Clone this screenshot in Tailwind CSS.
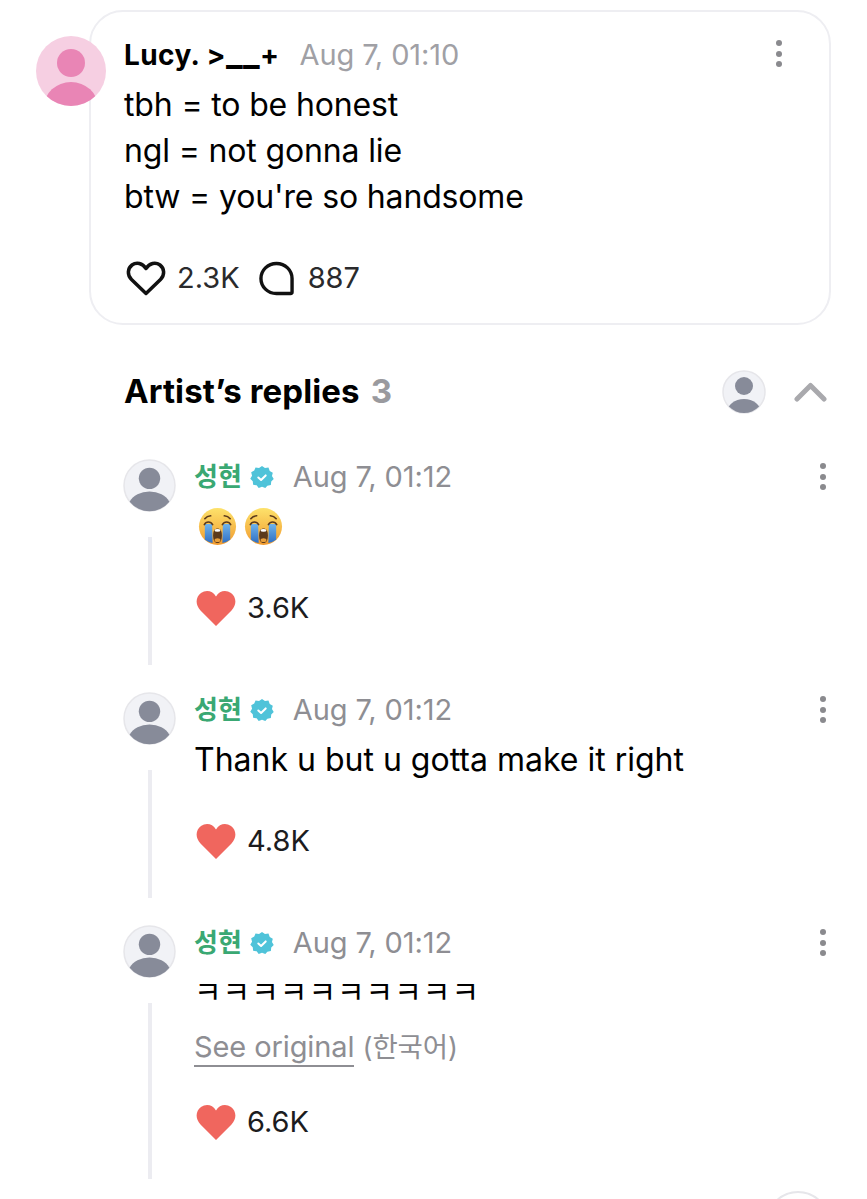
<!doctype html>
<html lang="en">
  <head>
    <meta charset="UTF-8" />
    <meta name="viewport" content="width=device-width, initial-scale=1.0" />
    <title>Post</title>
    <script src="https://cdn.jsdelivr.net/npm/@tailwindcss/browser@4"></script>
  </head>
  <body class="bg-white">
    <div class="relative w-[867px] h-[1199px] overflow-hidden font-['Inter','Noto_Sans_CJK_KR',sans-serif] text-[#1c1c1e]">
      <!-- fan post -->
      <div class="pt-[10px] pl-[89px]">
        <div class="relative w-[742px] h-[315px] border-2 border-[#eeeef2] rounded-[34px] pl-[33px] pt-[23px]">
          <div class="flex items-center h-[40px]">
            <span class="text-[28px] font-bold text-black tracking-[0.4px]">Lucy. &gt;<span class="text-[35px] leading-none">__</span>+</span>
            <span class="ml-[20px] text-[29px] text-[#a0a0a5] tracking-[-0.1px]">Aug 7, 01:10</span>
          </div>
          <div class="mt-[7px] text-[32px] leading-[46px] text-black tracking-[-0.15px]">
            <p>tbh = to be honest</p>
            <p>ngl = not gonna lie</p>
            <p>btw = you're so handsome</p>
          </div>
          <div class="flex items-center mt-[36px] h-[44px]">
            <svg class="ml-[2px] w-[40px] h-[36px]" viewBox="0 0 40 36" fill="none" stroke="#111" stroke-width="3.5" stroke-linejoin="round">
              <path d="M20 33.500 5.500 19.500C1 15 1.500 8.500 6 5c4.500-3.300 10.500-2 14 3.500C23.500 3 29.500 1.700 34 5c4.500 3.500 5 10 .5 14.500L20 33.500Z" />
            </svg>
            <span class="ml-[11px] text-[29px] text-[#2a2a2c]">2.3K</span>
            <svg class="ml-[19px] w-[35px] h-[35px]" viewBox="0 0 36 36" fill="none" stroke="#111" stroke-width="3.500">
              <path d="M18 2.500C9 2.500 2 9.500 2 18s7 15.500 16 15.500h14.500c1 0 1.500-.5 1.500-1.500V18C34 9.500 27 2.500 18 2.500Z" />
            </svg>
            <span class="ml-[14px] text-[29px] text-[#2a2a2c]">887</span>
          </div>
          <div class="absolute right-[47px] top-[28px] flex flex-col gap-[4.5px]">
            <span class="w-[6px] h-[6px] rounded-full bg-[#8a8a8e]"></span>
            <span class="w-[6px] h-[6px] rounded-full bg-[#8a8a8e]"></span>
            <span class="w-[6px] h-[6px] rounded-full bg-[#8a8a8e]"></span>
          </div>
        </div>
      </div>

      <!-- author avatar sits over the card edge -->
      <svg class="absolute left-[36px] top-[36px] w-[70px] h-[70px]" viewBox="0 0 70 70">
        <defs><clipPath id="c0"><circle cx="35" cy="35" r="35" /></clipPath></defs>
        <circle cx="35" cy="35" r="35" fill="#f6cfe2" />
        <g clip-path="url(#c0)" fill="#e985b5">
          <circle cx="35" cy="27" r="14" />
          <ellipse cx="35" cy="71" rx="27" ry="25" />
        </g>
      </svg>

      <!-- artist replies header -->
      <div class="flex items-center h-[46px] mt-[44px] pl-[124px] pr-[40px]">
        <span class="text-[33px] font-bold text-black tracking-[0.1px]">Artist’s replies</span>
        <span class="ml-[11px] text-[33px] font-bold text-[#9a9a9e]">3</span>
        <svg class="ml-auto w-[44px] h-[44px]" viewBox="0 0 44 44">
          <defs><clipPath id="c1"><circle cx="22" cy="22" r="21" /></clipPath></defs>
          <circle cx="22" cy="22" r="21" fill="#f1f2f6" stroke="#e6e6ea" stroke-width="1.500" />
          <g clip-path="url(#c1)" fill="#878b99">
            <circle cx="22" cy="16" r="9" />
            <ellipse cx="22" cy="43" rx="17" ry="14" />
          </g>
        </svg>
        <svg class="ml-[28px] w-[33px] h-[20px]" viewBox="0 0 33 20" fill="none" stroke="#a9a9ad" stroke-width="5" stroke-linecap="round" stroke-linejoin="round">
          <path d="M3 17 16.500 3.500 30 17" />
        </svg>
      </div>

      <div class="mt-[44px] pl-[123px] pr-[38px]">
        <!-- reply 1 -->
        <div class="flex h-[233px]">
          <div class="w-[71px] shrink-0 flex flex-col">
            <svg class="w-[53px] h-[53px]" viewBox="0 0 52 52">
              <circle cx="26" cy="26" r="25" fill="#f1f2f6" stroke="#e6e6ea" stroke-width="1.500" />
              <circle cx="26" cy="19" r="10.500" fill="#878b99" />
              <path d="M6.500 42a21 16 0 0 1 39 0 25 25 0 0 1-39 0Z" fill="#878b99" />
            </svg>
            <div class="mt-[25px] ml-[25px] w-[4px] h-[128px] bg-[#ececf1]"></div>
          </div>
          <div class="flex-1 relative">
            <div class="flex items-center h-[36px]">
              <span class="text-[26px] font-bold text-[#3aa873] leading-none">성현</span>
              <svg class="ml-[8px] w-[24px] h-[24px]" viewBox="0 0 26 26">
                <path d="M13 1l3.200 2.200 3.800-.4 1.400 3.600 3.300 1.900-.9 3.700 1.900 3.300-2.700 2.700-.4 3.800-3.800.6L16.600 25 13 23.600 9.400 25l-2.200-3-3.800-.6L3 17.600.3 14.900l1.900-3.300-.9-3.700 3.300-1.900L6 2.800l3.800.4Z" fill="#4fc3d9" />
                <path d="M9 13.500l3 2.800 5-5" fill="none" stroke="#fff" stroke-width="2.200" stroke-linecap="round" stroke-linejoin="round" />
              </svg>
              <span class="ml-[19px] text-[29px] text-[#8e8e93] tracking-[-0.1px]">Aug 7, 01:12</span>
            </div>
            <div class="flex gap-[7px] mt-[12px] ml-[4px]">
              <!-- loudly crying face -->
              <svg class="w-[39px] h-[39px]" viewBox="0 0 40 40">
                <defs>
                  <linearGradient id="f1" x1="0" y1="0" x2="0" y2="1"><stop offset="0" stop-color="#fde26b" /><stop offset="1" stop-color="#f19a2e" /></linearGradient>
                  <linearGradient id="t1" x1="0" y1="0" x2="0" y2="1"><stop offset="0" stop-color="#6fb3ea" /><stop offset="1" stop-color="#2f6fc4" /></linearGradient>
                </defs>
                <circle cx="20" cy="20" r="19" fill="url(#f1)" />
                <path d="M7 17.500h7.500l.5 19.500q-4-.8-8-3.500ZM33 17.500h-7.500L25 37q4-.8 8-3.500Z" fill="url(#t1)" />
                <path d="M15.500 29c0-5 2-7 4.500-7s4.500 2 4.500 7-1.500 8-4.500 8-4.500-3-4.500-8Z" fill="#5b3a1c" />
                <ellipse cx="20" cy="24" rx="3" ry="1.500" fill="#fff" />
                <ellipse cx="20" cy="34" rx="3" ry="2" fill="#e8a03c" />
                <path d="M6.500 18c1.800-3.500 6.500-3.500 8.500 0M25 18c2-3.500 6.700-3.500 8.500 0M7 12c1.500-1.800 3.500-2.800 6-3M33 12c-1.500-1.800-3.500-2.800-6-3" fill="none" stroke="#5b3a1c" stroke-width="1.700" stroke-linecap="round" />
              </svg>
              <svg class="w-[39px] h-[39px]" viewBox="0 0 40 40">
                <circle cx="20" cy="20" r="19" fill="url(#f1)" />
                <path d="M7 17.500h7.500l.5 19.500q-4-.8-8-3.500ZM33 17.500h-7.500L25 37q4-.8 8-3.500Z" fill="url(#t1)" />
                <path d="M15.500 29c0-5 2-7 4.500-7s4.500 2 4.500 7-1.500 8-4.500 8-4.500-3-4.500-8Z" fill="#5b3a1c" />
                <ellipse cx="20" cy="24" rx="3" ry="1.500" fill="#fff" />
                <ellipse cx="20" cy="34" rx="3" ry="2" fill="#e8a03c" />
                <path d="M6.500 18c1.800-3.500 6.500-3.500 8.500 0M25 18c2-3.500 6.700-3.500 8.500 0M7 12c1.500-1.800 3.500-2.800 6-3M33 12c-1.500-1.800-3.500-2.800-6-3" fill="none" stroke="#5b3a1c" stroke-width="1.700" stroke-linecap="round" />
              </svg>
            </div>
            <div class="flex items-center mt-[42px] h-[40px]">
              <svg class="ml-[2px] w-[40px] h-[36px]" viewBox="0 0 40 36"><path d="M20 36 4.500 20.500C-1 15-.5 7 5 3c5-3.500 11.500-2.500 15 3.500C23.500.5 30-.5 35 3c5.500 4 6 12 .5 17.500L20 36Z" fill="#f0665e" /></svg>
              <span class="ml-[11px] text-[29px] text-[#1c1c1e]">3.6K</span>
            </div>
            <div class="absolute right-[3px] top-[4px] flex flex-col gap-[4.5px]">
              <span class="w-[6px] h-[6px] rounded-full bg-[#8a8a8e]"></span>
              <span class="w-[6px] h-[6px] rounded-full bg-[#8a8a8e]"></span>
              <span class="w-[6px] h-[6px] rounded-full bg-[#8a8a8e]"></span>
            </div>
          </div>
        </div>

        <!-- reply 2 -->
        <div class="flex h-[233px]">
          <div class="w-[71px] shrink-0 flex flex-col">
            <svg class="w-[53px] h-[53px]" viewBox="0 0 52 52">
              <circle cx="26" cy="26" r="25" fill="#f1f2f6" stroke="#e6e6ea" stroke-width="1.500" />
              <circle cx="26" cy="19" r="10.500" fill="#878b99" />
              <path d="M6.500 42a21 16 0 0 1 39 0 25 25 0 0 1-39 0Z" fill="#878b99" />
            </svg>
            <div class="mt-[25px] ml-[25px] w-[4px] h-[128px] bg-[#ececf1]"></div>
          </div>
          <div class="flex-1 relative">
            <div class="flex items-center h-[36px]">
              <span class="text-[26px] font-bold text-[#3aa873] leading-none">성현</span>
              <svg class="ml-[8px] w-[24px] h-[24px]" viewBox="0 0 26 26">
                <path d="M13 1l3.200 2.200 3.800-.4 1.400 3.600 3.300 1.900-.9 3.700 1.900 3.300-2.700 2.700-.4 3.800-3.800.6L16.600 25 13 23.600 9.400 25l-2.200-3-3.800-.6L3 17.600.3 14.900l1.900-3.300-.9-3.700 3.300-1.900L6 2.800l3.800.4Z" fill="#4fc3d9" />
                <path d="M9 13.500l3 2.800 5-5" fill="none" stroke="#fff" stroke-width="2.200" stroke-linecap="round" stroke-linejoin="round" />
              </svg>
              <span class="ml-[19px] text-[29px] text-[#8e8e93] tracking-[-0.1px]">Aug 7, 01:12</span>
            </div>
            <p class="mt-[9px] text-[32px] leading-[46px] text-black">Thank u but u gotta make it right</p>
            <div class="flex items-center mt-[38px] h-[40px]">
              <svg class="ml-[2px] w-[40px] h-[36px]" viewBox="0 0 40 36"><path d="M20 36 4.500 20.500C-1 15-.5 7 5 3c5-3.500 11.500-2.500 15 3.500C23.500.5 30-.5 35 3c5.500 4 6 12 .5 17.500L20 36Z" fill="#f0665e" /></svg>
              <span class="ml-[11px] text-[29px] text-[#1c1c1e]">4.8K</span>
            </div>
            <div class="absolute right-[3px] top-[4px] flex flex-col gap-[4.5px]">
              <span class="w-[6px] h-[6px] rounded-full bg-[#8a8a8e]"></span>
              <span class="w-[6px] h-[6px] rounded-full bg-[#8a8a8e]"></span>
              <span class="w-[6px] h-[6px] rounded-full bg-[#8a8a8e]"></span>
            </div>
          </div>
        </div>

        <!-- reply 3, translated -->
        <div class="flex">
          <div class="w-[71px] shrink-0 flex flex-col">
            <svg class="w-[53px] h-[53px]" viewBox="0 0 52 52">
              <circle cx="26" cy="26" r="25" fill="#f1f2f6" stroke="#e6e6ea" stroke-width="1.500" />
              <circle cx="26" cy="19" r="10.500" fill="#878b99" />
              <path d="M6.500 42a21 16 0 0 1 39 0 25 25 0 0 1-39 0Z" fill="#878b99" />
            </svg>
            <div class="mt-[25px] ml-[25px] w-[4px] h-[176px] bg-[#ececf1]"></div>
          </div>
          <div class="flex-1 relative">
            <div class="flex items-center h-[36px]">
              <span class="text-[26px] font-bold text-[#3aa873] leading-none">성현</span>
              <svg class="ml-[8px] w-[24px] h-[24px]" viewBox="0 0 26 26">
                <path d="M13 1l3.200 2.200 3.800-.4 1.400 3.600 3.300 1.900-.9 3.700 1.900 3.300-2.700 2.700-.4 3.800-3.800.6L16.600 25 13 23.600 9.400 25l-2.200-3-3.800-.6L3 17.600.3 14.900l1.900-3.300-.9-3.700 3.300-1.900L6 2.800l3.800.4Z" fill="#4fc3d9" />
                <path d="M9 13.500l3 2.800 5-5" fill="none" stroke="#fff" stroke-width="2.200" stroke-linecap="round" stroke-linejoin="round" />
              </svg>
              <span class="ml-[19px] text-[29px] text-[#8e8e93] tracking-[-0.1px]">Aug 7, 01:12</span>
            </div>
            <p class="mt-[11px] text-[30px] leading-[40px] text-black tracking-[1px]">ㅋㅋㅋㅋㅋㅋㅋㅋㅋㅋ</p>
            <p class="mt-[17px] text-[29px] leading-[36px] text-[#8e8e93] tracking-[-0.1px]"><span class="border-b-2 border-[#8e8e93] pb-[1px]">See original</span> <span class="text-[27.5px]">(한국어)</span></p>
            <div class="flex items-center mt-[37px] h-[40px]">
              <svg class="ml-[2px] w-[40px] h-[36px]" viewBox="0 0 40 36"><path d="M20 36 4.500 20.500C-1 15-.5 7 5 3c5-3.500 11.500-2.500 15 3.500C23.500.5 30-.5 35 3c5.500 4 6 12 .5 17.500L20 36Z" fill="#f0665e" /></svg>
              <span class="ml-[11px] text-[29px] text-[#1c1c1e]">6.6K</span>
            </div>
            <div class="absolute right-[3px] top-[4px] flex flex-col gap-[4.5px]">
              <span class="w-[6px] h-[6px] rounded-full bg-[#8a8a8e]"></span>
              <span class="w-[6px] h-[6px] rounded-full bg-[#8a8a8e]"></span>
              <span class="w-[6px] h-[6px] rounded-full bg-[#8a8a8e]"></span>
            </div>
          </div>
        </div>
      </div>

      <!-- floating button, cut off by the window -->
      <div class="absolute left-[766px] top-[1191px] w-[64px] h-[64px] rounded-full border-2 border-[#e6e6ea] bg-white"></div>
    </div>
  </body>
</html>
